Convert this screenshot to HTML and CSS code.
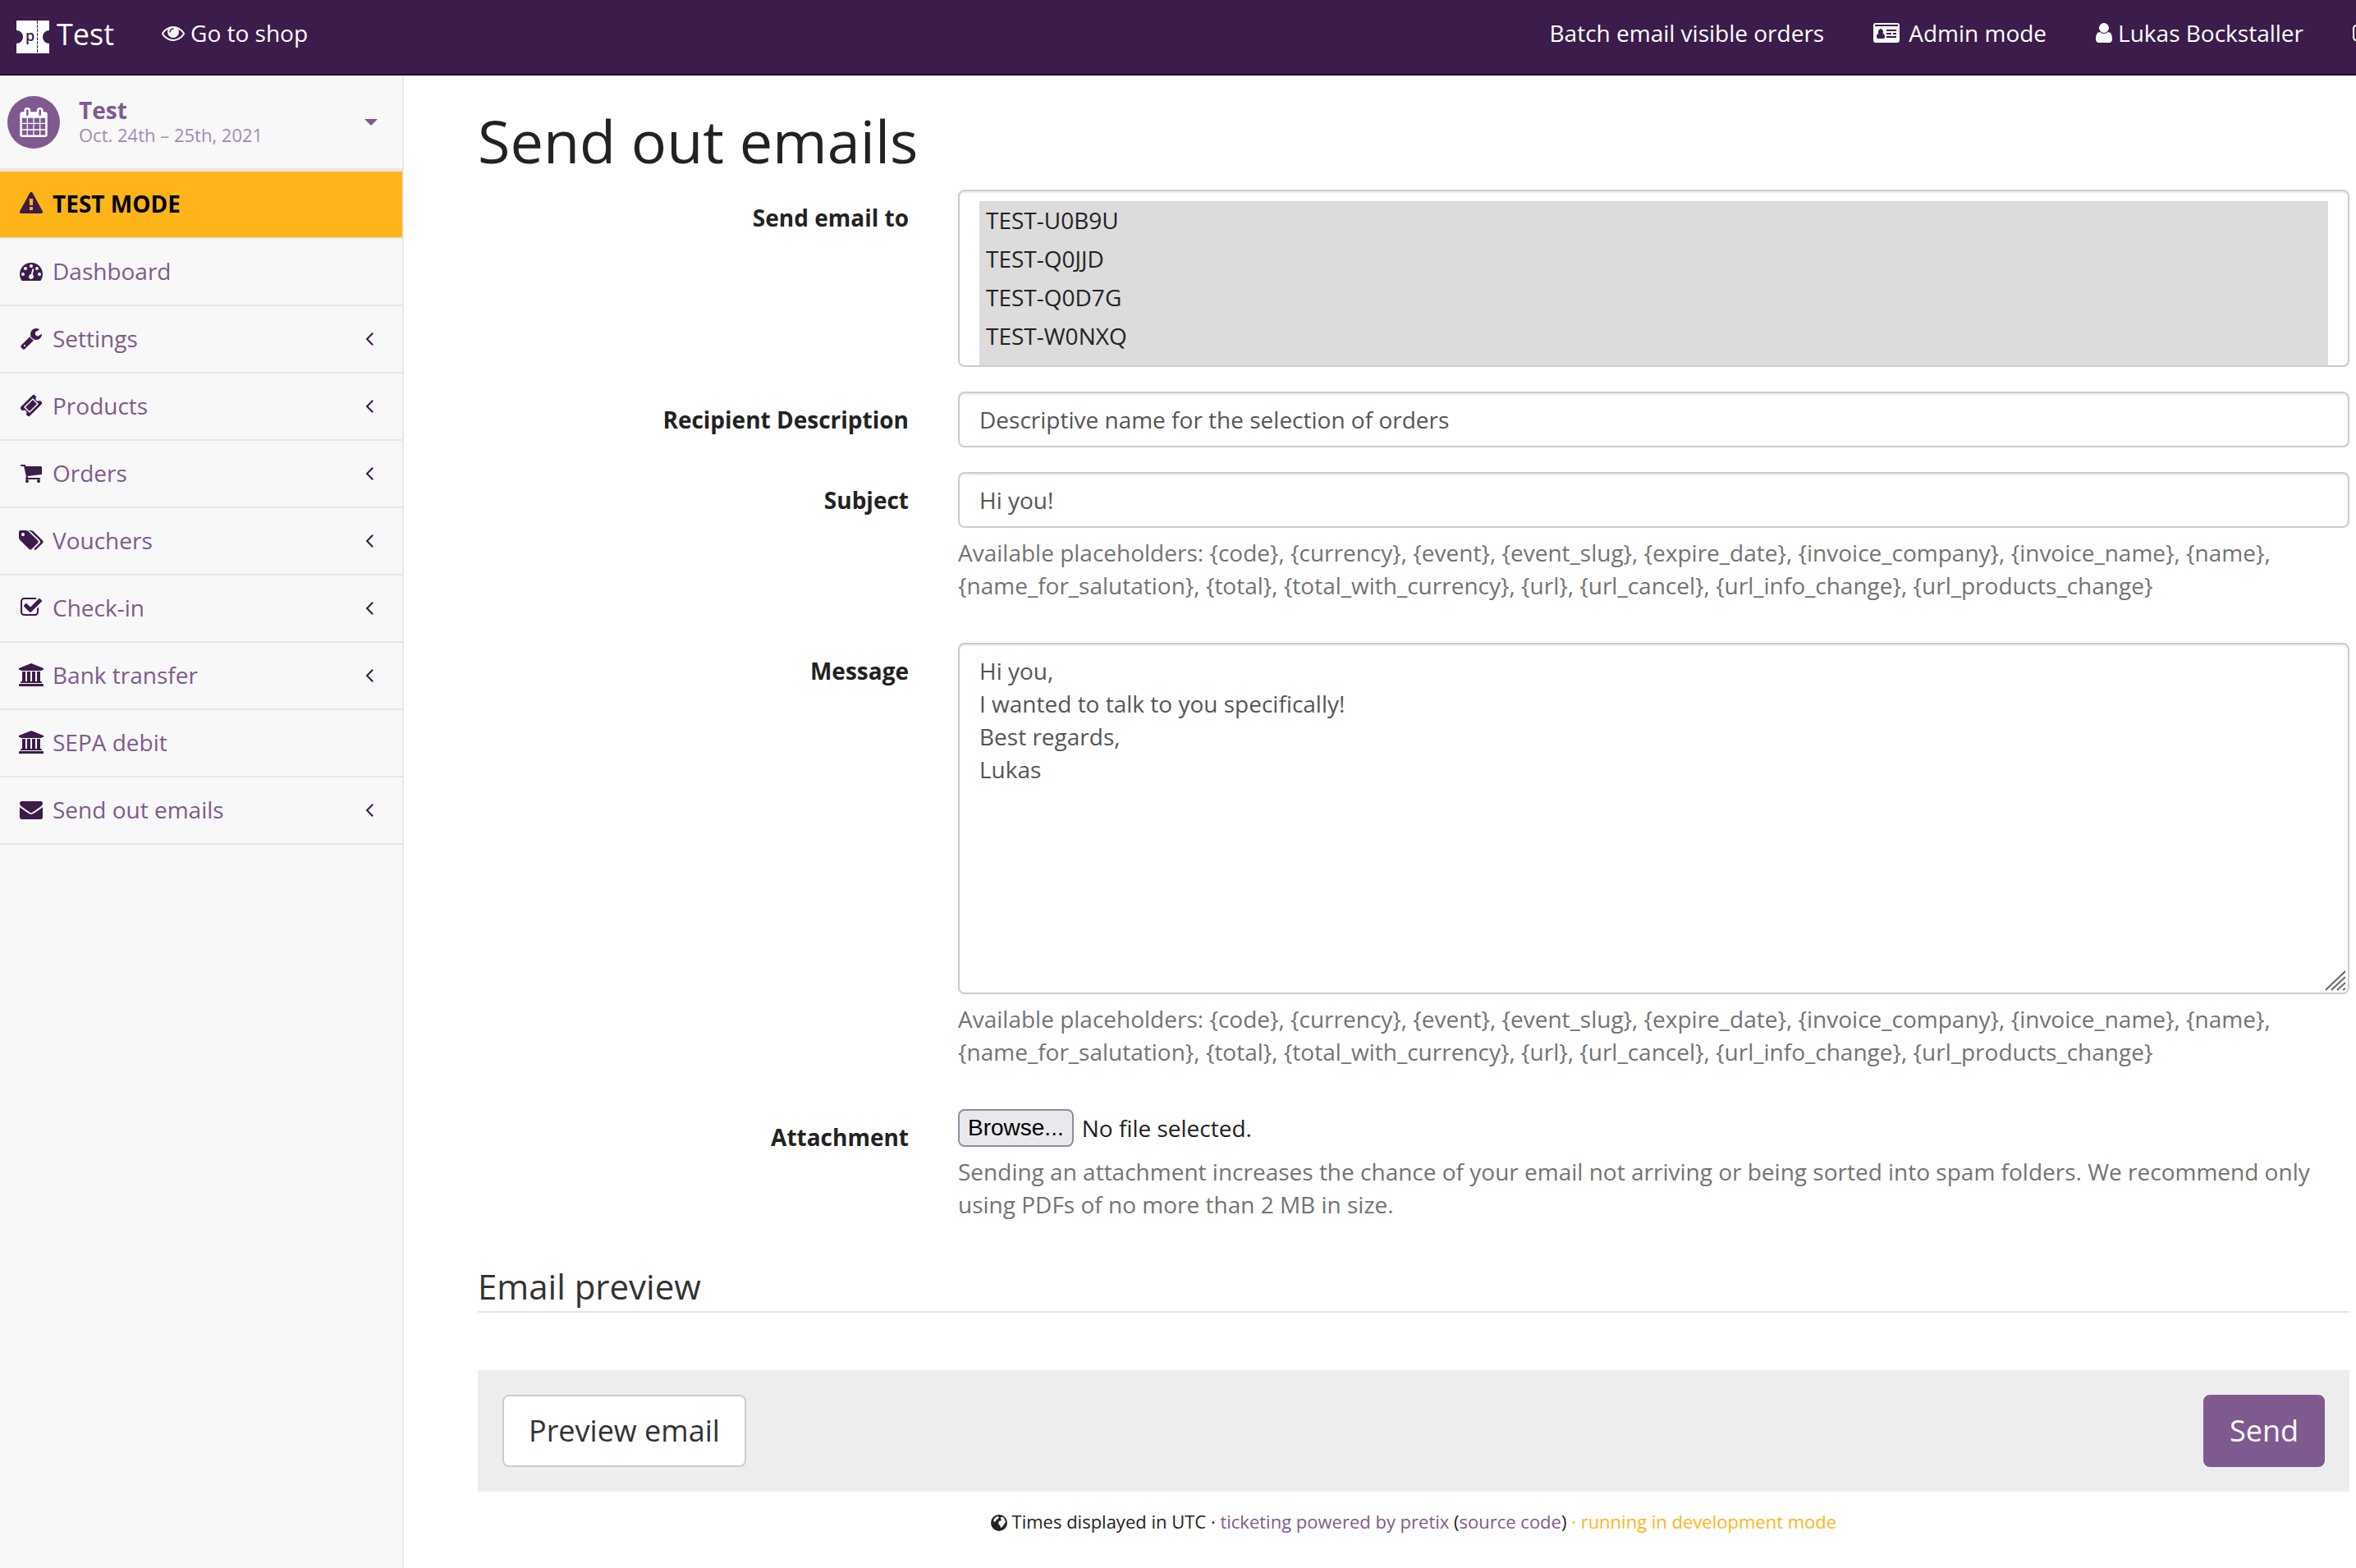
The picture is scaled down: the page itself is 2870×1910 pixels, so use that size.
FILE: index.html
```html
<!DOCTYPE html>
<html lang="en">
<head>
<meta charset="utf-8">
<meta name="viewport" content="width=device-width, initial-scale=1">
<title>Send out emails</title>
<link rel="stylesheet" href="styles.css">
</head>
<body>
<svg class="sprite" aria-hidden="true">
  <symbol id="i-angle" viewBox="512 0 768 1792"><path d="M1203 544q0 13-10 23l-393 393 393 393q10 10 10 23t-10 23l-50 50q-10 10-23 10t-23-10l-466-466q-10-10-10-23t10-23l466-466q10-10 23-10t23 10l50 50q10 10 10 23z"/></symbol>
  <symbol id="i-bank" viewBox="0 0 1920 1792"><path d="M960 0l960 384v128h-128q0 26-20.500 45t-48.500 19h-1526q-28 0-48.500-19t-20.500-45h-128v-128zm-704 640h256v768h128v-768h256v768h128v-768h256v768h128v-768h256v768h59q28 0 48.500 19t20.500 45v64h-1664v-64q0-26 20.500-45t48.500-19h59v-768zm1595 960q28 0 48.500 19t20.500 45v128h-1920v-128q0-26 20.500-45t48.500-19h1782z"/></symbol>
</svg>

<header class="topbar">
  <a class="brand" href="#">
    <svg class="logo" viewBox="0 0 40 40" aria-hidden="true">
      <path fill="#fff" d="M0 0H40V12A8 8 0 0 0 40 28V40H0V28A8 8 0 0 0 0 12Z"/>
      <path stroke="#3b1c4a" stroke-width="1" stroke-dasharray="4 1" d="M25.500 0V40"/>
      <text x="11" y="25" font-family="Open Sans, sans-serif" font-weight="600" font-size="18" fill="#3b1c4a">p</text>
    </svg>
    <span>Test</span>
  </a>
  <nav class="topnav">
    <a class="toplink" href="#">
      <svg class="icon" viewBox="0 0 1792 1792" aria-hidden="true"><path d="M1664 960q-152-236-381-353 61 104 61 225 0 185-131.500 316.500t-316.500 131.500-316.500-131.500-131.500-316.500q0-121 61-225-229 117-381 353 133 205 333.500 326.500t434.500 121.500 434.500-121.500 333.500-326.500zm-720-384q0-20-14-34t-34-14q-125 0-214.500 89.500t-89.500 214.500q0 20 14 34t34 14 34-14 14-34q0-86 61-147t147-61q20 0 34-14t14-34zm848 384q0 34-20 69-140 230-376.500 368.500t-499.500 138.500-499.500-139-376.500-368q-20-35-20-69t20-69q140-229 376.500-368t499.500-139 499.500 139 376.500 368q20 35 20 69z"/></svg>
      <span>Go to shop</span>
    </a>
  </nav>
  <nav class="topnav topnav-right">
    <a class="toplink" href="#">Batch email visible orders</a>
    <a class="toplink" href="#">
      <svg class="icon icon-card" viewBox="0 0 36 28" aria-hidden="true"><path fill-rule="evenodd" d="M3 2H29Q32 2 32 5V23Q32 26 29 26H3Q0 26 0 23V5Q0 2 3 2ZM2 4V6H30V4ZM9 9A3.500 4 0 0 0 6.500 15Q4 15 4 19Q4 21 6 21H12Q14 21 14 19Q14 15 11.500 15A3.500 4 0 0 0 9 9ZM16 10V12H28V10ZM16 14V16H22V14ZM24 14V16H28V14ZM16 18V20H28V18Z"/></svg>
      <span>Admin mode</span>
    </a>
    <a class="toplink" href="#">
      <svg class="icon icon-user" viewBox="256 0 1280 1792" aria-hidden="true"><path d="M1536 1399q0 109-62.500 187t-150.500 78h-854q-88 0-150.500-78t-62.500-187q0-85 8.500-160.500t31.500-152 58.500-131 94-89 134.500-34.500q131 128 313 128t313-128q76 0 134.500 34.500t94 89 58.500 131 31.500 152 8.500 160.500zm-256-887q0 159-112.500 271.500t-271.500 112.500-271.500-112.500-112.500-271.500 112.500-271.500 271.500-112.500 271.500 112.500 112.500 271.500z"/></svg>
      <span>Lukas Bockstaller</span>
    </a>
    <a class="toplink" href="#" aria-label="Log out">
      <svg class="icon icon-out" viewBox="0 0 1664 1792" aria-hidden="true"><path d="M640 1440q0 4 1 20t.5 26.500-3 23.500-10 19.500-20.500 6.500h-320q-119 0-203.500-84.500t-84.500-203.500v-704q0-119 84.500-203.500t203.500-84.500h320q13 0 22.500 9.500t9.500 22.500q0 4 1 20t.5 26.500-3 23.500-10 19.500-20.500 6.500h-320q-66 0-113 47t-47 113v704q0 66 47 113t113 47h312l11.500 1 11.500 3 8 5.500 7 9 2 13.500zm928-544q0 26-19 45l-544 544q-19 19-45 19t-45-19-19-45v-288h-448q-26 0-45-19t-19-45v-384q0-26 19-45t45-19h448v-288q0-26 19-45t45-19 45 19l544 544q19 19 19 45z"/></svg>
    </a>
  </nav>
</header>

<div class="layout">
  <aside class="sidebar">
    <a class="event" href="#">
      <span class="event-icon">
        <svg class="icon-calendar" viewBox="0 0 1792 1792" aria-hidden="true"><path d="M192 1664h288v-288h-288v288zm352 0h320v-288h-320v288zm-352-352h288v-320h-288v320zm352 0h320v-320h-320v320zm-352-384h288v-288h-288v288zm736 736h320v-288h-320v288zm-384-736h320v-288h-320v288zm768 736h288v-288h-288v288zm-384-352h320v-320h-320v320zm-352-864v-288q0-13-9.500-22.500t-22.500-9.500h-64q-13 0-22.500 9.500t-9.500 22.500v288q0 13 9.500 22.500t22.500 9.500h64q13 0 22.500-9.500t9.500-22.500zm736 864h288v-320h-288v320zm-384-384h320v-288h-320v288zm384 0h288v-288h-288v288zm32-480v-288q0-13-9.500-22.500t-22.500-9.500h-64q-13 0-22.500 9.500t-9.500 22.500v288q0 13 9.500 22.500t22.500 9.500h64q13 0 22.500-9.500t9.500-22.500zm384-64v1280q0 52-38 90t-90 38h-1408q-52 0-90-38t-38-90v-1280q0-52 38-90t90-38h128v-96q0-66 47-113t113-47h64q66 0 113 47t47 113v96h384v-96q0-66 47-113t113-47h64q66 0 113 47t47 113v96h128q52 0 90 38t38 90z"/></svg>
      </span>
      <span class="event-text">
        <strong class="event-name">Test</strong>
        <span class="event-date">Oct. 24th – 25th, 2021</span>
      </span>
      <span class="caret"></span>
    </a>
    <ul class="menu">
      <li><a class="menu-link testmode" href="#">
        <span class="menu-icon"><svg class="icon" viewBox="0 0 1792 1792" aria-hidden="true"><path d="M1024 1375v-190q0-14-9.500-23.500t-22.500-9.500h-192q-13 0-22.500 9.500t-9.500 23.500v190q0 14 9.500 23.500t22.500 9.500h192q13 0 22.500-9.500t9.500-23.500zm-2-374l18-459q0-12-10-19-13-11-24-11h-220q-11 0-24 11-10 7-10 21l17 457q0 10 10 16.500t24 6.500h185q14 0 23.500-6.500t10.500-16.500zm-14-934l768 1408q35 63-2 126-17 29-46.500 46t-63.500 17h-1536q-34 0-63.500-17t-46.500-46q-37-63-2-126l768-1408q17-31 47-49t65-18 65 18 47 49z"/></svg></span>
        <span>TEST MODE</span></a></li>
      <li><a class="menu-link" href="#">
        <span class="menu-icon"><svg class="icon" viewBox="0 0 1792 1792" aria-hidden="true"><path d="M384 1152q0-53-37.500-90.500t-90.500-37.500-90.500 37.500-37.500 90.500 37.500 90.500 90.500 37.500 90.500-37.500 37.500-90.500zm192-448q0-53-37.500-90.500t-90.500-37.500-90.500 37.500-37.500 90.500 37.500 90.500 90.500 37.500 90.500-37.500 37.500-90.500zm428 481l101-382q6-26-7.500-48.500t-38.500-29.500-48 6.500-30 39.500l-101 382q-60 5-107 43.500t-63 98.500q-20 77 20 146t117 89 146-20 89-117q16-60-6-117t-72-91zm660-33q0-53-37.500-90.500t-90.500-37.500-90.500 37.500-37.500 90.500 37.500 90.500 90.500 37.500 90.500-37.500 37.500-90.500zm-640-640q0-53-37.500-90.500t-90.500-37.500-90.500 37.500-37.500 90.500 37.500 90.500 90.500 37.500 90.500-37.500 37.500-90.500zm448 192q0-53-37.500-90.500t-90.500-37.500-90.500 37.500-37.500 90.500 37.500 90.500 90.500 37.500 90.500-37.500 37.500-90.500zm320 448q0 261-141 483-19 29-54 29h-1402q-35 0-54-29-141-221-141-483 0-182 71-348t191-286 286-191 348-71 348 71 286 191 191 286 71 348z"/></svg></span>
        <span>Dashboard</span></a></li>
      <li><a class="menu-link" href="#">
        <span class="menu-icon"><svg class="icon" viewBox="0 0 1792 1792" aria-hidden="true"><path d="M448 1472q0-26-19-45t-45-19-45 19-19 45 19 45 45 19 45-19 19-45zm644-420l-682 682q-37 37-90 37-52 0-91-37l-106-108q-38-36-38-90 0-53 38-91l681-681q39 98 114.500 173.500t173.500 114.500zm634-435q0 39-23 106-47 134-164.500 217.500t-258.500 83.500q-185 0-316.500-131.500t-131.500-316.500 131.500-316.500 316.500-131.500q58 0 121.500 16.500t107.500 46.500q16 11 16 28t-16 28l-293 169v224l193 107q5-3 79-48.500t135.500-81 70.500-35.500q15 0 23.500 10t8.500 25z"/></svg></span>
        <span>Settings</span><svg class="chevron" aria-hidden="true"><use href="#i-angle"/></svg></a></li>
      <li><a class="menu-link" href="#">
        <span class="menu-icon"><svg class="icon" viewBox="0 0 1792 1792" aria-hidden="true"><path d="M1024 452l316 316-572 572-316-316zm-211 979l618-618q19-19 19-45t-19-45l-362-362q-18-18-45-18t-45 18l-618 618q-19 19-19 45t19 45l362 362q18 18 45 18t45-18zm889-637l-907 908q-37 37-90.500 37t-90.500-37l-126-126q56-56 56-136t-56-136-136-56-136 56l-125-126q-37-37-37-90.500t37-90.500l907-906q37-37 90.500-37t90.500 37l125 125q-56 56-56 136t56 136 136 56 136-56l126 125q37 37 37 90.500t-37 90.500z"/></svg></span>
        <span>Products</span><svg class="chevron" aria-hidden="true"><use href="#i-angle"/></svg></a></li>
      <li><a class="menu-link" href="#">
        <span class="menu-icon"><svg class="icon" viewBox="0 0 1792 1792" aria-hidden="true"><path d="M704 1536q0 52-38 90t-90 38-90-38-38-90 38-90 90-38 90 38 38 90zm896 0q0 52-38 90t-90 38-90-38-38-90 38-90 90-38 90 38 38 90zm128-1088v512q0 24-16.500 42.500t-40.500 21.500l-1044 122q13 60 13 70 0 16-24 64h920q26 0 45 19t19 45-19 45-45 19h-1024q-26 0-45-19t-19-45q0-11 8-31.500t16-36 21.500-40 15.500-29.500l-177-823h-204q-26 0-45-19t-19-45 19-45 45-19h256q16 0 28.500 6.500t19.500 15.500 13 24.500 8 26 5.500 29.500 4.500 26h1201q26 0 45 19t19 45z"/></svg></span>
        <span>Orders</span><svg class="chevron" aria-hidden="true"><use href="#i-angle"/></svg></a></li>
      <li><a class="menu-link" href="#">
        <span class="menu-icon"><svg class="icon icon-wide" viewBox="0 0 1920 1792" aria-hidden="true"><path d="M448 448q0-53-37.500-90.500t-90.500-37.500-90.500 37.500-37.500 90.500 37.500 90.500 90.500 37.500 90.500-37.500 37.500-90.500zm1067 576q0 53-37 90l-491 492q-39 37-91 37-53 0-90-37l-715-716q-38-37-64.500-101t-26.500-117v-416q0-52 38-90t90-38h416q53 0 117 26.500t102 64.500l715 714q37 39 37 91zm384 0q0 53-37 90l-491 492q-39 37-91 37-36 0-59-14t-53-45l470-470q37-37 37-90 0-52-37-91l-715-714q-38-38-102-64.500t-117-26.500h224q53 0 117 26.500t102 64.500l715 714q37 39 37 91z"/></svg></span>
        <span>Vouchers</span><svg class="chevron" aria-hidden="true"><use href="#i-angle"/></svg></a></li>
      <li><a class="menu-link" href="#">
        <span class="menu-icon"><svg class="icon" viewBox="0 0 1792 1792" aria-hidden="true"><path d="M1472 930v318q0 119-84.500 203.500t-203.500 84.500h-832q-119 0-203.500-84.500t-84.500-203.500v-832q0-119 84.500-203.500t203.500-84.500h832q63 0 117 25 15 7 18 23 3 17-9 29l-49 49q-10 10-23 10-3 0-9-2-23-6-45-6h-832q-66 0-113 47t-47 113v832q0 66 47 113t113 47h832q66 0 113-47t47-113v-254q0-13 9-22l64-64q10-10 23-10 6 0 12 3 20 8 20 29zm231-489l-814 814q-24 24-57 24t-57-24l-430-430q-24-24-24-57t24-57l110-110q24-24 57-24t57 24l263 263 647-647q24-24 57-24t57 24l110 110q24 24 24 57t-24 57z"/></svg></span>
        <span>Check-in</span><svg class="chevron" aria-hidden="true"><use href="#i-angle"/></svg></a></li>
      <li><a class="menu-link" href="#">
        <span class="menu-icon"><svg class="icon icon-wide" aria-hidden="true"><use href="#i-bank"/></svg></span>
        <span>Bank transfer</span><svg class="chevron" aria-hidden="true"><use href="#i-angle"/></svg></a></li>
      <li><a class="menu-link" href="#">
        <span class="menu-icon"><svg class="icon icon-wide" aria-hidden="true"><use href="#i-bank"/></svg></span>
        <span>SEPA debit</span></a></li>
      <li><a class="menu-link" href="#">
        <span class="menu-icon"><svg class="icon" viewBox="0 0 1792 1792" aria-hidden="true"><path d="M1792 710v794q0 66-47 113t-113 47h-1472q-66 0-113-47t-47-113v-794q44 49 101 87 362 246 497 345 57 42 92.500 65.500t94.500 48 110 24.500h2q51 0 110-24.500t94.500-48 92.500-65.500q170-123 498-345 57-39 100-87zm0-294q0 79-49 151t-122 123q-376 261-468 325-10 7-42.500 31t-54 38.500-52 32.500-57.500 27-50 9h-2q-23 0-50-9t-57.500-27-52-32.500-54-38.500-42.500-31q-91-64-262-182.500t-205-142.500q-62-42-117-115.500t-55-136.500q0-78 41.500-130t118.500-52h1472q65 0 112.500 47t47.500 113z"/></svg></span>
        <span>Send out emails</span><svg class="chevron" aria-hidden="true"><use href="#i-angle"/></svg></a></li>
    </ul>
  </aside>

  <main class="content">
    <h1 class="title">Send out emails</h1>
    <form>
      <div class="row">
        <label class="label" for="orders">Send email to</label>
        <div class="field">
          <select class="control order-list" id="orders" multiple size="4">
            <option selected>TEST-U0B9U</option>
            <option selected>TEST-Q0JJD</option>
            <option selected>TEST-Q0D7G</option>
            <option selected>TEST-W0NXQ</option>
            <option selected></option>
          </select>
        </div>
      </div>
      <div class="row">
        <label class="label" for="recipients">Recipient Description</label>
        <div class="field">
          <input class="control" id="recipients" type="text" value="Descriptive name for the selection of orders">
        </div>
      </div>
      <div class="row">
        <label class="label" for="subject">Subject</label>
        <div class="field">
          <input class="control" id="subject" type="text" value="Hi you!">
          <p class="help">Available placeholders: {code}, {currency}, {event}, {event_slug}, {expire_date}, {invoice_company}, {invoice_name}, {name}, {name_for_salutation}, {total}, {total_with_currency}, {url}, {url_cancel}, {url_info_change}, {url_products_change}</p>
        </div>
      </div>
      <div class="row">
        <label class="label" for="message">Message</label>
        <div class="field">
          <div class="message-box">
            <textarea class="control message" id="message" rows="10">Hi you,
I wanted to talk to you specifically!
Best regards,
Lukas</textarea>
            <svg class="grip" viewBox="0 0 26 25" aria-hidden="true"><path d="M1 24L25 1M8 24L25 8M15 24L25 15M22 24L25 22"/></svg>
          </div>
          <p class="help">Available placeholders: {code}, {currency}, {event}, {event_slug}, {expire_date}, {invoice_company}, {invoice_name}, {name}, {name_for_salutation}, {total}, {total_with_currency}, {url}, {url_cancel}, {url_info_change}, {url_products_change}</p>
        </div>
      </div>
      <div class="row">
        <label class="label" for="attachment">Attachment</label>
        <div class="field">
          <div class="file">
            <button class="browse" type="button" tabindex="-1">Browse...</button>
            <span>No file selected.</span>
            <input class="file-input" id="attachment" type="file">
          </div>
          <p class="help">Sending an attachment increases the chance of your email not arriving or being sorted into spam folders. We recommend only using PDFs of no more than 2 MB in size.</p>
        </div>
      </div>
      <h2 class="legend">Email preview</h2>
      <div class="actions">
        <button class="btn btn-default" type="button">Preview email</button>
        <button class="btn btn-primary" type="submit">Send</button>
      </div>
    </form>
    <footer class="footer">
      <svg class="icon-globe" viewBox="0 0 20 20" aria-hidden="true"><path fill-rule="evenodd" d="M10 0A10 10 0 1 0 10 20A10 10 0 1 0 10 0ZM5 4L8 2L10 3L9 5L7 6L6 8L4 9L3 7ZM12 3L15 3L17 6L18 9L16 12L14 15L12 16L11 13L9 11L10 8L13 7L12 5Z"/></svg>
      Times displayed in UTC · <a href="#">ticketing powered by pretix</a> (<a href="#">source code</a>) <span class="devmode">· running in development mode</span>
    </footer>
  </main>
</div>
</body>
</html>
```
FILE: styles.css
```css
* { box-sizing: border-box; }

body {
  display: flex;
  flex-direction: column;
  min-height: 100vh;
  margin: 0;
  font: 28px/40px "Open Sans", "Noto Sans", sans-serif;
  color: #222;
  background: #fff;
}

a { color: #7f5a91; text-decoration: none; }

.sprite { position: absolute; width: 0; height: 0; }

.icon { flex: none; width: 28px; height: 28px; fill: currentColor; }
.icon-wide { width: 30px; }
.icon-card { width: 36px; }
.icon-user { width: 20px; }
.icon-out { width: 26px; }

/* Top bar */
.topbar {
  display: flex;
  overflow: hidden;
  background: #3b1c4a;
  border-bottom: 2px solid #1f0e27;
}
.brand {
  display: flex;
  align-items: center;
  gap: 9px;
  padding: 18px 28px 24px 20px;
  color: #fff;
  font-size: 36px;
  line-height: 44px;
}
.logo { width: 40px; height: 40px; margin-top: 6px; }
.topnav { display: flex; }
.topnav-right { margin-left: auto; margin-right: -52px; }
.toplink {
  display: flex;
  align-items: center;
  gap: 7px;
  padding: 20px 30px 30px;
  color: #fff;
  white-space: nowrap;
}

/* Sidebar */
.layout { display: flex; flex: 1; }
.sidebar {
  flex: none;
  width: 492px;
  background: #f8f8f8;
  border-right: 2px solid #e7e7e7;
}
.event {
  display: flex;
  align-items: center;
  padding: 25px 30px 24px 9px;
  border-bottom: 4px solid #e7e7e7;
}
.event-icon {
  display: flex;
  align-items: center;
  justify-content: center;
  width: 64px;
  height: 64px;
  border-radius: 50%;
  background: #7f5a91;
}
.icon-calendar { width: 36px; height: 36px; fill: #fff; }
.event-text {
  display: flex;
  flex: 1;
  flex-direction: column;
  margin-left: 23px;
  line-height: 30px;
}
.event-date { font-size: 22px; color: #a58bb2; }
.caret {
  border: 8px solid transparent;
  border-top-color: #7f5a91;
  border-bottom: 0;
}
.menu { margin: 0; padding: 0; list-style: none; }
.menu-link {
  display: flex;
  align-items: center;
  gap: 8px;
  padding: 19px 34px 21px 20px;
  border-bottom: 2px solid #e7e7e7;
}
.menu-icon {
  display: flex;
  justify-content: center;
  width: 36px;
  color: #3b1c4a;
}
.chevron { width: 12px; height: 28px; margin-left: auto; fill: #3b1c4a; }
.testmode { background: #ffb419; color: #000; font-weight: 700; }

/* Form */
.content { flex: 1; min-width: 0; padding: 40px 8px 0 90px; }
.title { margin: 0 0 20px; font-size: 72px; line-height: 79px; font-weight: 400; }
.row {
  display: grid;
  grid-template-columns: minmax(0, 1fr) minmax(0, 3fr);
  margin: 0 -30px 30px;
}
.label { padding: 14px 30px 0; font-weight: 700; text-align: right; }
.field { padding: 0 30px; }
.control {
  display: block;
  width: 100%;
  margin: 0;
  padding: 12px 24px;
  border: 2px solid #ccc;
  border-radius: 8px;
  background: #fff;
  box-shadow: inset 0 2px 2px rgba(0, 0, 0, 0.075);
  color: #555;
  font: inherit;
  outline: 0;
}
.order-list { height: 216px; overflow: hidden; scrollbar-width: none; }
.order-list option {
  min-height: 47px;
  padding: 4px 8px 3px;
  line-height: 40px;
  color: #222;
}
.order-list option:checked {
  background: #dcdcdc linear-gradient(#dcdcdc, #dcdcdc);
  color: #222;
}
.message-box { position: relative; }
.message { resize: none; }
.grip {
  position: absolute;
  right: 4px;
  bottom: 4px;
  width: 26px;
  height: 25px;
  fill: none;
  stroke: #666;
  stroke-width: 2px;
}
.help { margin: 10px 0 20px; color: #737373; }
.file {
  position: relative;
  display: flex;
  align-items: center;
  gap: 10px;
  height: 46px;
}
.browse {
  padding: 1px 10px;
  border: 2px solid #8f8f9d;
  border-radius: 8px;
  background: #e9e9ed;
  color: #000;
  font: 28px/40px "Liberation Sans", Arial, sans-serif;
}
.file-input { position: absolute; inset: 0; width: 100%; height: 100%; opacity: 0; }
.legend {
  margin: 0 0 70px;
  border-bottom: 2px solid #e5e5e5;
  color: #333;
  font-size: 42px;
  line-height: 60px;
  font-weight: 400;
}
.actions {
  display: flex;
  justify-content: space-between;
  padding: 30px;
  background: #ededed;
}
.btn {
  padding: 18px 30px;
  border: 2px solid #ccc;
  border-radius: 8px;
  background: #fff;
  color: #333;
  font: 36px/48px "Open Sans", "Noto Sans", sans-serif;
}
.btn-primary { border-color: #7f5a91; background: #7f5a91; color: #fff; }

.footer {
  padding: 16px 0 30px;
  font-size: 22px;
  text-align: center;
}
.icon-globe { width: 20px; height: 20px; vertical-align: -3px; fill: #222; }
.devmode { color: #ffb419; }
```
